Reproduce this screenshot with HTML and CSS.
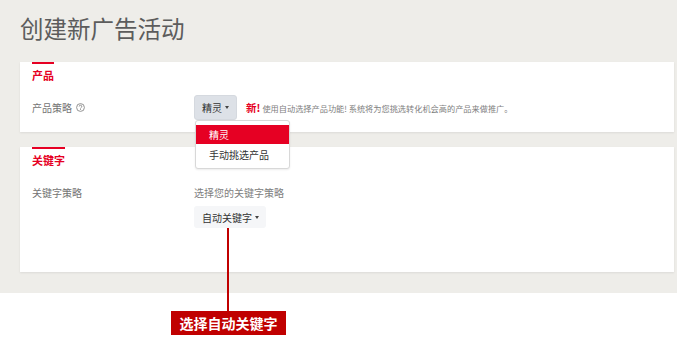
FILE: index.html
```html
<!DOCTYPE html>
<html lang="zh-CN">
<head>
<meta charset="utf-8">
<title>创建新广告活动</title>
<link rel="stylesheet" href="styles.css">
</head>
<body>
<div class="page">
  <h1 class="title">创建新广告活动</h1>

  <section class="card card-product">
    <h2 class="card-heading">产品</h2>
    <div class="row">
      <div class="label">产品策略
        <svg class="help" width="9" height="9" viewBox="0 0 9 9"><circle cx="4.5" cy="4.5" r="3.9" fill="none" stroke="#888" stroke-width="0.9"/><path d="M3.2 3.5a1.3 1.3 0 1 1 1.8 1.2c-.4.2-.5.4-.5.8" fill="none" stroke="#888" stroke-width="0.9"/><circle cx="4.5" cy="6.6" r="0.5" fill="#888"/></svg>
      </div>
      <div class="control control-inline">
        <div class="dropdown">
          <button class="btn btn-active">精灵<span class="caret"></span></button>
          <ul class="menu">
            <li class="menu-item selected">精灵</li>
            <li class="menu-item">手动挑选产品</li>
          </ul>
        </div>
        <span class="new">新!</span>
        <span class="desc">使用自动选择产品功能! 系统将为您挑选转化机会高的产品来做推广。</span>
      </div>
    </div>
  </section>

  <section class="card card-keyword">
    <h2 class="card-heading">关键字</h2>
    <div class="row row-top">
      <div class="label">关键字策略</div>
      <div class="control control-stack">
        <div class="hint">选择您的关键字策略</div>
        <button class="btn btn-light">自动关键字<span class="caret"></span></button>
      </div>
    </div>
  </section>
</div>

<div class="callout-line"></div>
<div class="callout-box">选择自动关键字</div>
</body>
</html>
```

FILE: styles.css
```css
* { box-sizing: border-box; }

body {
  margin: 0;
  background: #ffffff;
  font-family: "Noto Sans CJK SC", "Noto Sans", sans-serif;
  color: #666;
}

.page {
  background: #eeede9;
  height: 293px;
  padding: 16px 3px 0 20px;
}

.title {
  margin: 0;
  font-size: 23.5px;
  line-height: 24px;
  font-weight: 400;
  color: #5c5c5c;
}

.card {
  background: #fff;
  margin-top: 22px;
  padding: 0 12px;
  box-shadow: 0 1px 2px rgba(0, 0, 0, 0.08);
}

.card-keyword {
  margin-top: 15px;
  padding-bottom: 44px;
}

.card-product {
  padding-bottom: 12px;
}

.card-heading {
  display: block;
  width: fit-content;
  margin: 0;
  border-top: 2px solid #e60023;
  padding-top: 6px;
  font-size: 11px;
  line-height: 11px;
  font-weight: 700;
  color: #e60023;
}

.row {
  display: grid;
  grid-template-columns: 162px 1fr;
  align-items: center;
  margin-top: 14px;
}

.row-top {
  align-items: start;
  margin-top: 21px;
}

.label {
  font-size: 10px;
  line-height: 11px;
  color: #747474;
  display: flex;
  align-items: center;
  gap: 4px;
}

.help { display: block; }

.control-inline {
  display: flex;
  align-items: center;
}

.control-stack {
  display: flex;
  flex-direction: column;
  align-items: flex-start;
  gap: 8px;
}

.hint {
  font-size: 10px;
  line-height: 11px;
  color: #808080;
}

.dropdown { position: relative; }

.btn {
  display: flex;
  align-items: center;
  border: 0;
  border-radius: 3px;
  font-family: inherit;
  font-size: 10px;
  color: #333;
  padding: 0 7px 0 8px;
  white-space: nowrap;
  cursor: pointer;
}

.btn-active {
  height: 25px;
  background: #dde1e7;
  border: 1px solid #d5d9df;
  padding-left: 7px;
}

.btn-light {
  height: 22px;
  background: #f5f6f8;
}

.caret {
  width: 0;
  height: 0;
  margin-left: 3px;
  border-left: 2.5px solid transparent;
  border-right: 2.5px solid transparent;
  border-top: 3px solid #444;
}

.menu {
  position: absolute;
  top: 100%;
  left: 1px;
  width: 95px;
  margin: 0;
  padding: 4px 0 4px;
  list-style: none;
  background: #fff;
  border: 1px solid #d8d8d8;
  border-radius: 3px;
  box-shadow: 0 1px 2px rgba(0, 0, 0, 0.08);
  z-index: 2;
}

.menu-item {
  height: 19px;
  line-height: 19px;
  padding-left: 13px;
  font-size: 10px;
  color: #333;
}

.menu-item.selected {
  background: #e60023;
  color: #fff;
  margin-bottom: 1px;
}

.new {
  margin-left: 9px;
  font-size: 10.5px;
  font-weight: 700;
  color: #e60023;
}

.desc {
  margin-left: 2px;
  font-size: 8.2px;
  color: #808080;
  white-space: nowrap;
}

.callout-line {
  position: absolute;
  left: 227px;
  top: 228px;
  width: 2px;
  height: 83px;
  background: #c00000;
}

.callout-box {
  position: absolute;
  left: 171px;
  top: 311px;
  width: 115px;
  height: 24px;
  background: #c00000;
  color: #fff;
  font-size: 14px;
  font-weight: 700;
  line-height: 24px;
  text-align: center;
}
```
